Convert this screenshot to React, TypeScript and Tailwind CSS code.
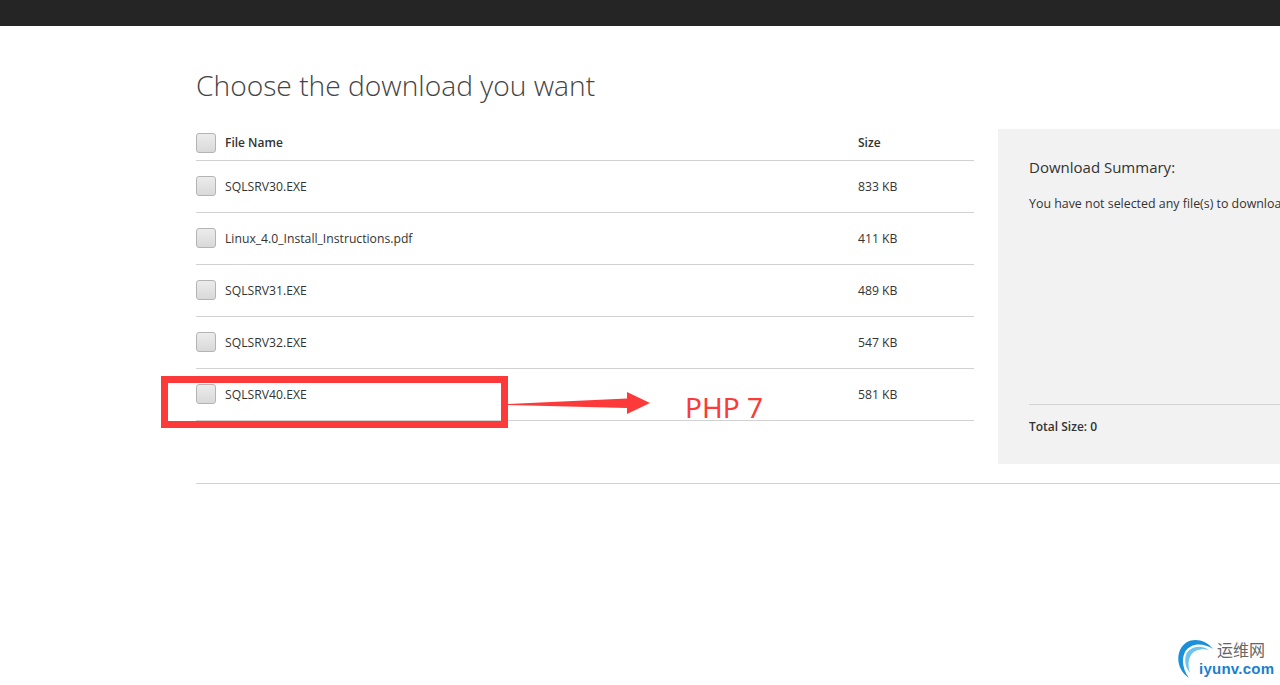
const files = [
  { name: "SQLSRV30.EXE", size: "833 KB" },
  { name: "Linux_4.0_Install_Instructions.pdf", size: "411 KB" },
  { name: "SQLSRV31.EXE", size: "489 KB" },
  { name: "SQLSRV32.EXE", size: "547 KB" },
  { name: "SQLSRV40.EXE", size: "581 KB" },
];

const font = "font-['Open_Sans','Noto_Sans',sans-serif]";

const Checkbox = () => (
  <div className="h-5 w-5 shrink-0 rounded-[3px] border border-[#b4b4b4] bg-gradient-to-b from-[#ececec] to-[#d9d9d9]" />
);

const Logo = () => (
  <div className="absolute left-[1177px] top-[638px] h-[47px] w-[103px]">
    <svg width="50" height="47" viewBox="0 0 50 47" className="absolute left-0 top-0">
      <path d="M36 11C27 0 10 -2 3 12C-1 22 2 33 12 40C6 32 4 22 8 14C13 5 26 4 36 11Z" fill="#1b8fd8" />
      <path d="M32 12C23 6 12 9 9 17C7 24 9 30 13 35C11 28 11 22 14 17C17 12 25 10 32 12Z" fill="#6fc3ec" />
    </svg>
    <span className="absolute left-[40px] top-[1px] font-['Noto_Sans_CJK_SC',sans-serif] text-[16px] leading-[20px] text-[#666666]">
      运维网
    </span>
    <span className="absolute left-[22px] top-[22px] font-['Liberation_Sans',sans-serif] text-[15px] font-semibold leading-[18px] tracking-[0.25px] text-[#1a7fd0]">
      iyunv.com
    </span>
  </div>
);

export default function App() {
  return (
    <div className={`relative h-[685px] w-[1280px] overflow-hidden bg-white ${font} text-[#333333]`}>
      <div className="h-[26px] bg-[#252525]" />

      <div className="pl-[196px]">
        <h1 className="pt-[39px] text-[28.2px] font-light leading-[41px] text-[#444444]">
          Choose the download you want
        </h1>

        <div className="mt-[22px] flex items-start gap-[24px] border-b border-[#d2d2d2] pb-[19px]">
          <div className="w-[778px] shrink-0">
            <div className="flex h-[33px] items-start gap-[9px] border-b border-[#d2d2d2] pt-[5px]">
              <Checkbox />
              <span className="w-[624px] text-[12px] font-semibold leading-[20px]">File Name</span>
              <span className="text-[12px] font-semibold leading-[20px]">Size</span>
            </div>
            {files.map((file) => (
              <div key={file.name} className="flex h-[52px] items-start gap-[9px] border-b border-[#d2d2d2] pt-[15px]">
                <Checkbox />
                <span className="w-[624px] text-[12.2px] leading-[22px]">{file.name}</span>
                <span className="text-[12.2px] leading-[22px]">{file.size}</span>
              </div>
            ))}
          </div>

          <div className="mt-px flex h-[335px] min-w-0 flex-1 flex-col overflow-hidden bg-[#f2f2f2] pl-[31px]">
            <h2 className="whitespace-nowrap pt-[26px] text-[15px] leading-[24px]">Download Summary:</h2>
            <p className="mt-[15px] whitespace-nowrap text-[12.4px] leading-[20px]">
              You have not selected any file(s) to download
            </p>
            <div className="mt-auto h-[60px] border-t border-[#d2d2d2] pt-[12px] text-[12px] font-semibold leading-[20px]">
              Total Size: 0
            </div>
          </div>
        </div>
      </div>

      <div className="absolute left-[161px] top-[376px] h-[52px] w-[347px] border-[7px] border-[#fc3a3a]" />
      <svg width="144" height="24" viewBox="0 0 144 24" className="absolute left-[507px] top-[391px]">
        <path d="M1 13L120 7.5V1L143 12L120 23V17L1 14Z" fill="#fc3a3a" />
      </svg>
      <span className="absolute left-[685px] top-[388px] font-['Noto_Sans',sans-serif] text-[28px] leading-[38px] text-[#fc3a3a]">
        PHP 7
      </span>

      <Logo />
    </div>
  );
}
